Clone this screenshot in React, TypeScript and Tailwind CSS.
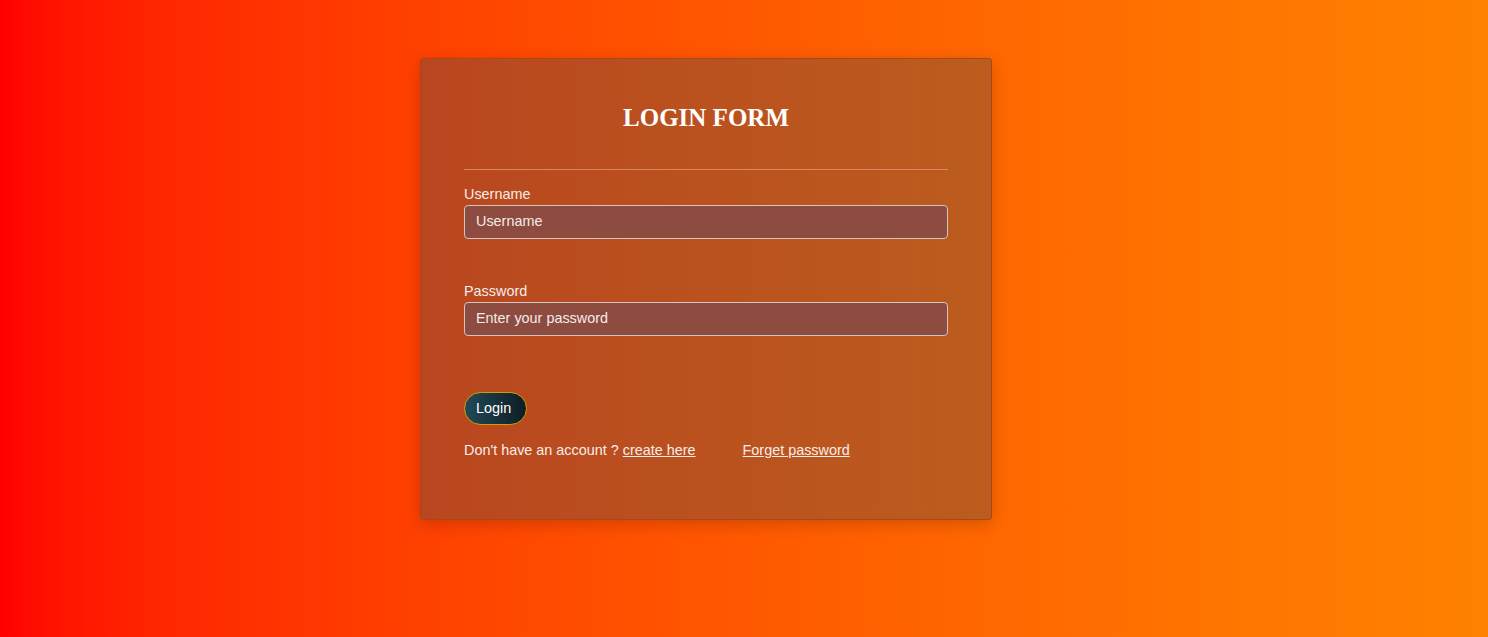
export default function App() {
  return (
    <div
      className="w-full h-[637px] bg-gradient-to-r from-[#ff0000] to-[#ff8200] flex"
      style={{ fontFamily: '"Liberation Sans", Arial, sans-serif' }}
    >
      <div className="ml-[420px] mt-[58px] w-[572px] h-[462px] border border-[#a8471c] rounded-[3px] bg-gradient-to-r from-[#b9461f] to-[#bc5c1e] shadow-[0_4px_16px_rgba(0,0,0,0.18)] pt-[44px] px-[43px] flex flex-col">
        <h1
          className="text-center text-white font-bold text-[25px] leading-[30px]"
          style={{ fontFamily: '"Liberation Serif", "Times New Roman", serif' }}
        >
          LOGIN FORM
        </h1>
        <div className="mt-[36px] h-px bg-[#d9855f]" />
        <label className="mt-[16px] text-[14.4px] leading-[17px] text-[#f5ede8]">Username</label>
        <div className="mt-[2px] h-[34px] rounded-[4px] border border-[#cfc6c2] bg-[#8e4b3f] flex items-center pl-[11px] text-[14.4px] text-[#f3ecea]">
          Username
        </div>
        <label className="mt-[44px] text-[14.4px] leading-[17px] text-[#f5ede8]">Password</label>
        <div className="mt-[2px] h-[34px] rounded-[4px] border border-[#cfc6c2] bg-[#8e4b3f] flex items-center pl-[11px] text-[14.4px] text-[#f3ecea]">
          Enter your password
        </div>
        <div className="mt-[56px]">
          <button className="h-[33px] w-[63px] rounded-full border border-[#c9a100] bg-gradient-to-r from-[#22495a] to-[#0e1e24] text-white text-[14.4px] flex items-center pl-[11px]">
            Login
          </button>
        </div>
        <div className="mt-[17px] text-[14.4px] leading-[17px] text-[#f5ede8] flex">
          <span>
            Don't have an account ? <span className="underline">create here</span>
          </span>
          <span className="ml-[47px] underline">Forget password</span>
        </div>
      </div>
    </div>
  );
}
